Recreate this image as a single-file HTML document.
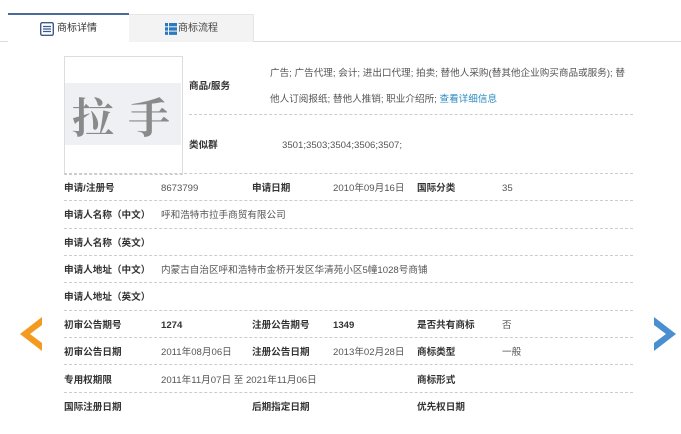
<!DOCTYPE html>
<html><head><meta charset="utf-8"><style>
body{margin:0;width:681px;height:434px;background:#fff;font-family:"Liberation Sans","Noto Sans CJK SC",sans-serif;font-size:9.6px;color:#555;position:relative;overflow:hidden}
.a{position:absolute;white-space:nowrap;line-height:14px}
.b{font-weight:bold;color:#333}
.l{position:absolute;left:64px;width:569px;border-top:1px dashed #ccc;height:0}
</style></head><body>
<div class="a" style="left:0;top:41px;width:681px;border-top:1px solid #ddd"></div>
<div class="a" style="left:8px;top:13px;width:121px;height:28px;border-top:2px solid #4a6a9a;background:#fff"></div>
<div class="a" style="left:129px;top:14px;width:124px;height:27px;background:#f3f3f3;border-top:1px solid #e6e6e6;border-right:1px solid #e6e6e6"></div>
<svg class="a" style="left:40px;top:22px" width="14" height="14"><rect x="0.7" y="0.7" width="12.6" height="12.6" rx="1.5" fill="none" stroke="#3a5a8a" stroke-width="1.4"/><path d="M3 4.5h8M3 7h8M3 9.5h8" stroke="#3a5a8a" stroke-width="1.2"/></svg>
<div class="a" style="left:57px;top:22px;font-size:10px;color:#333">商标详情</div>
<svg class="a" style="left:165px;top:23px" width="12" height="12"><rect x="0" y="0" width="3" height="3.3" fill="#2a7ac0"/><rect x="4" y="0" width="8" height="3.3" fill="#2a7ac0"/><rect x="0" y="4.3" width="3" height="3.3" fill="#2a7ac0"/><rect x="4" y="4.3" width="8" height="3.3" fill="#2a7ac0"/><rect x="0" y="8.6" width="3" height="3.3" fill="#2a7ac0"/><rect x="4" y="8.6" width="8" height="3.3" fill="#2a7ac0"/></svg>
<div class="a" style="left:178px;top:22px;font-size:10px;color:#444">商标流程</div>
<div class="a" style="left:64px;top:56px;width:117px;height:117px;border:1px solid #ddd;border-bottom:1px dashed #ccc"></div>
<div class="a" style="left:65px;top:83px;width:116px;height:62px;background:#eef0f4"></div>
<div class="a" style="left:72px;top:88px;font-size:42px;line-height:56px;font-weight:bold;color:#8a8a8a;letter-spacing:14px;font-family:'Noto Serif CJK SC',serif">拉手</div>
<div class="a b" style="left:189px;top:80px">商品/服务</div>
<div class="a" style="left:270px;top:67px">广告; 广告代理; 会计; 进出口代理; 拍卖; 替他人采购(替其他企业购买商品或服务); 替</div>
<div class="a" style="left:270px;top:93px">他人订阅报纸; 替他人推销; 职业介绍所; <span style="color:#2a8ac0">查看详细信息</span></div>
<div class="l" style="left:189px;width:444px;top:114px"></div>
<div class="a b" style="left:189px;top:139px">类似群</div>
<div class="a" style="left:282px;top:139px">3501;3503;3504;3506;3507;</div>
<div class="l" style="top:173px"></div>
<div class="l" style="top:200px"></div>
<div class="l" style="top:228px"></div>
<div class="l" style="top:255px"></div>
<div class="l" style="top:282px"></div>
<div class="l" style="top:310px"></div>
<div class="l" style="top:337px"></div>
<div class="l" style="top:364px"></div>
<div class="l" style="top:392px"></div>
<div class="a b" style="left:64px;top:182px">申请/注册号</div><div class="a" style="left:161px;top:182px">8673799</div>
<div class="a b" style="left:252px;top:182px">申请日期</div><div class="a" style="left:333px;top:182px">2010年09月16日</div>
<div class="a b" style="left:417px;top:182px">国际分类</div><div class="a" style="left:502px;top:182px">35</div>
<div class="a b" style="left:64px;top:209px">申请人名称（中文）</div><div class="a" style="left:161px;top:209px">呼和浩特市拉手商贸有限公司</div>
<div class="a b" style="left:64px;top:237px">申请人名称（英文）</div>
<div class="a b" style="left:64px;top:264px">申请人地址（中文）</div><div class="a" style="left:161px;top:264px">内蒙古自治区呼和浩特市金桥开发区华清苑小区5幢1028号商铺</div>
<div class="a b" style="left:64px;top:291px">申请人地址（英文）</div>
<div class="a b" style="left:64px;top:319px">初审公告期号</div><div class="a b" style="left:161px;top:319px">1274</div>
<div class="a b" style="left:252px;top:319px">注册公告期号</div><div class="a b" style="left:333px;top:319px">1349</div>
<div class="a b" style="left:417px;top:319px">是否共有商标</div><div class="a" style="left:502px;top:319px">否</div>
<div class="a b" style="left:64px;top:346px">初审公告日期</div><div class="a" style="left:161px;top:346px">2011年08月06日</div>
<div class="a b" style="left:252px;top:346px">注册公告日期</div><div class="a" style="left:333px;top:346px">2013年02月28日</div>
<div class="a b" style="left:417px;top:346px">商标类型</div><div class="a" style="left:502px;top:346px">一般</div>
<div class="a b" style="left:64px;top:374px">专用权期限</div><div class="a" style="left:161px;top:374px">2011年11月07日 至 2021年11月06日</div>
<div class="a b" style="left:417px;top:374px">商标形式</div>
<div class="a b" style="left:64px;top:401px">国际注册日期</div>
<div class="a b" style="left:252px;top:401px">后期指定日期</div>
<div class="a b" style="left:417px;top:401px">优先权日期</div>
<svg class="a" style="left:20px;top:317px" width="22" height="34"><path d="M22 0L0 17L22 34V26L10 17L22 8Z" fill="#f39a1f"/></svg>
<svg class="a" style="left:654px;top:317px" width="22" height="34"><path d="M0 0L22 17L0 34V26L12 17L0 8Z" fill="#4a90d0"/></svg>
</body></html>
